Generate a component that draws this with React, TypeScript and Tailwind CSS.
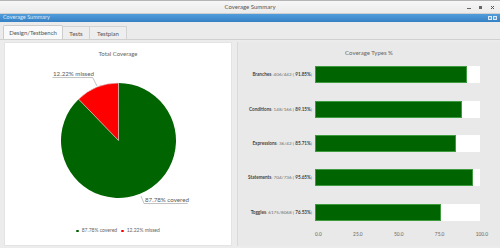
import React from 'react';

const rows = [
    { name: 'Branches', count: '406/442', pct: 91.85 },
    { name: 'Conditions', count: '148/166', pct: 89.15 },
    { name: 'Expressions', count: '36/42', pct: 85.71 },
    { name: 'Statements', count: '704/736', pct: 95.65 },
    { name: 'Toggles', count: '6175/8068', pct: 76.53 },
];

const ticks = ['0.0', '25.0', '50.0', '75.0', '100.0'];

function PieChart() {
    const cx = 117.5;
    const cy = 139.5;
    const r = 57.5;
    const a = (12.22 / 100) * Math.PI * 2;
    const ex = cx - r * Math.sin(a);
    const ey = cy - r * Math.cos(a);

    return (
        <svg className="block w-[228px] h-[162px]" viewBox="4 62 228 162">
            <path d={`M${cx} ${cy} L${ex} ${ey} A${r} ${r} 0 1 0 ${cx} ${cy - r} Z`} fill="#006400" />
            <path
                d={`M${cx} ${cy} L${cx} ${cy - r} A${r} ${r} 0 0 0 ${ex} ${ey} Z`}
                fill="#ff0000"
                stroke="#d9d9d9"
                strokeWidth="0.6"
            />
            <polyline points="51.5,76.5 91.7,76.5 96,85" fill="none" stroke="#9a9a9a" strokeWidth="0.6" />
            <text x="52" y="75" fontSize="6.2" fill="#5a5a5a" fontFamily="Lato, sans-serif">12.22% missed</text>
            <polyline points="140,195 143,202.5 186.7,202.5" fill="none" stroke="#9a9a9a" strokeWidth="0.6" />
            <text x="144" y="201" fontSize="6.2" fill="#5a5a5a" fontFamily="Lato, sans-serif">87.78% covered</text>
        </svg>
    );
}

function WindowControls() {
    return (
        <div className="flex items-center gap-[8px] pr-[5px]">
            <span className="block w-[4px] h-px bg-[#666] mt-[3px]" />
            <span className="block w-[3px] h-[3px] bg-[#666]" />
            <svg width="5" height="5" viewBox="0 0 5 5">
                <path d="M1 1 L4 4 M4 1 L1 4" stroke="#555" strokeWidth="1" />
            </svg>
        </div>
    );
}

export default function App() {
    return (
        <div className="w-[500px] h-[248px] bg-[#ececec] flex flex-col overflow-hidden font-['Lato',_sans-serif] text-[#555]">
            {/* title bar */}
            <div className="h-[14px] grid grid-cols-[1fr_auto_1fr] items-center bg-gradient-to-b from-[#f6f6f6] to-[#ebebeb] border-t border-[#b5b5b5] border-b border-b-[#cfcfcf]">
                <div />
                <span className="text-[6px] leading-none text-[#555]">Coverage Summary</span>
                <div className="flex justify-end">
                    <WindowControls />
                </div>
            </div>

            {/* blue header */}
            <div className="h-[8px] flex items-center justify-between bg-gradient-to-b from-[#519cda] to-[#3581c4] px-[3px]">
                <span className="text-[5.5px] leading-none text-[#d8e9fa]">Coverage Summary</span>
                <div className="flex gap-[1px]">
                    <span className="block w-[4px] h-[4px] border border-[#dbe9f7] bg-[#6aa3d6]" />
                    <span className="block w-[4px] h-[4px] border border-[#dbe9f7] bg-[#6aa3d6]" />
                </div>
            </div>

            {/* tabs */}
            <div className="h-[18px] flex items-end pl-[3px] bg-[#ebebeb] border-b border-[#d0d0d0]">
                <div className="h-[14px] w-[60px] flex items-center justify-center bg-[#f9f9f9] border border-b-0 border-[#cccccc] rounded-t-[2px] text-[6px] text-[#555]">
                    Design/Testbench
                </div>
                <div className="h-[13px] w-[27px] flex items-center justify-center bg-[#eeeeee] border border-b-0 border-l-0 border-[#d3d3d3] text-[6px] text-[#555]">
                    Tests
                </div>
                <div className="h-[13px] w-[37px] flex items-center justify-center bg-[#eeeeee] border border-b-0 border-l-0 border-[#d3d3d3] text-[6px] text-[#555]">
                    Testplan
                </div>
            </div>

            {/* content */}
            <div className="flex-1 flex pt-[2px] pb-[2px] pl-[4px]">
                {/* left panel */}
                <div className="w-[228px] bg-white flex flex-col border border-[#e4e4e4]">
                    <div className="h-[20px] flex items-center justify-center text-[6px] text-[#666]">Total Coverage</div>
                    <PieChart />
                    <div className="h-[12px] flex items-center justify-center gap-[3px] text-[5px] text-[#666]">
                        <span className="w-[2.5px] h-[2.5px] rounded-full bg-[#006400]" />
                        <span>87.78% covered</span>
                        <span className="ml-[1px] w-[2.5px] h-[2.5px] rounded-full bg-[#ff0000]" />
                        <span>12.22% missed</span>
                    </div>
                </div>

                {/* right panel */}
                <div className="ml-[5px] flex-1 flex flex-col bg-[#e9e9e9] border-l border-[#dadada]">
                    <div className="pt-[6px] h-[15.5px] text-center text-[6px] leading-[9px] text-[#666]">Coverage Types %</div>
                    {rows.map((row) => (
                        <div key={row.name} className="h-[34.4px] flex items-center">
                            <div className="w-[77px] text-right pr-[3px] text-[4.6px] text-[#6f6f6f] whitespace-nowrap">
                                <span className="font-bold text-[#444]">{row.name}</span>: {row.count} ({' '}
                                <span className="font-bold text-[#444]">{row.pct.toFixed(2)}%</span>)
                            </div>
                            <div className="w-[165px] h-[17px] bg-white">
                                <div
                                    className="h-full bg-[#006400] border border-[#3d9a3d]"
                                    style={{ width: `${row.pct}%` }}
                                />
                            </div>
                        </div>
                    ))}
                    <div className="h-[10px] flex items-center">
                        <div className="w-[80px]" />
                        <div className="w-[165px] flex justify-between text-[4.8px] text-[#666]">
                            {ticks.map((t, i) => (
                                <span
                                    key={t}
                                    className={i === 0 ? '-ml-[3px]' : i === ticks.length - 1 ? '-mr-[5px]' : ''}
                                >
                                    {t}
                                </span>
                            ))}
                        </div>
                    </div>
                </div>
            </div>
        </div>
    );
}
